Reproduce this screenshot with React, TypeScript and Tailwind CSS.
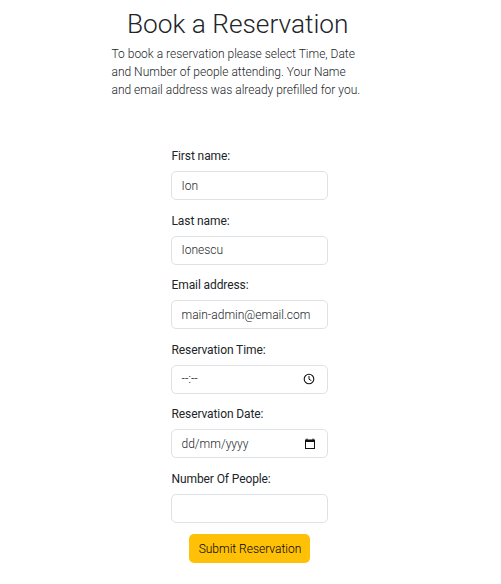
import React from 'react';

type FieldProps = { label: string; value: string; icon?: React.ReactNode; dark?: boolean };

function Field({ label, value, icon, dark }: FieldProps) {
  return (
    <div className="h-[64.5px]">
      <div className="h-[21px] pl-[0.5px] text-[12px] leading-[18px] font-normal tracking-[-0.1px] whitespace-nowrap">{label}</div>
      <div className="mt-[3px] flex h-[29px] items-center justify-between rounded-[5px] border border-[#dee2e6] pr-[9px] pl-[9.5px] text-[12px] font-light">
        <span className={dark ? 'text-black' : undefined}>{value}</span>
        {icon}
      </div>
    </div>
  );
}

function Clock() {
  return (
    <svg width="12" height="12" viewBox="0 0 12 12" fill="none" stroke="#111" className="mr-[3.5px]">
      <circle cx="6" cy="6" r="4.8" strokeWidth="1.1" />
      <path d="M6 3v3.2l2.3 1.4" strokeWidth="1" />
    </svg>
  );
}

function Calendar() {
  return (
    <svg width="12" height="12" viewBox="0 0 12 12" className="mr-[2px]">
      <path fill="#111" fillRule="evenodd" d="M2.5 0.5h1v1h5v-1h1v1H11V11H1V1.500h1.500zM2 4v6h8V4z" />
    </svg>
  );
}

export default function App() {
  return (
    <main className="h-[584px] w-[501px] overflow-hidden bg-white font-['Roboto',sans-serif] text-[#212529]">
      <h1 className="pl-[127px] pt-[8px] text-[26.25px] leading-[32px] font-light whitespace-nowrap">Book a Reservation</h1>
      <p className="mt-[5px] ml-[111.5px] w-[260px] text-[12px] leading-[18px] font-light whitespace-nowrap">
        To book a reservation please select Time, Date<br />
        and Number of people attending. Your Name<br />
        and email address was already prefilled for you.
      </p>
      <form className="mt-[48px] ml-[171px] w-[157px]">
        <Field label="First name:" value="Ion" />
        <Field label="Last name:" value="Ionescu" />
        <Field label="Email address:" value="main-admin@email.com" />
        <Field label="Reservation Time:" value="--:--" icon={<Clock />} dark />
        <Field label="Reservation Date:" value="dd/mm/yyyy" icon={<Calendar />} />
        <Field label="Number Of People:" value="" />
        <button type="button" className="ml-[18px] flex h-[29px] w-[121px] items-center justify-center rounded-[5px] bg-[#ffc107] pl-[1px] text-[12px] font-light text-black">
          Submit Reservation
        </button>
      </form>
    </main>
  );
}
